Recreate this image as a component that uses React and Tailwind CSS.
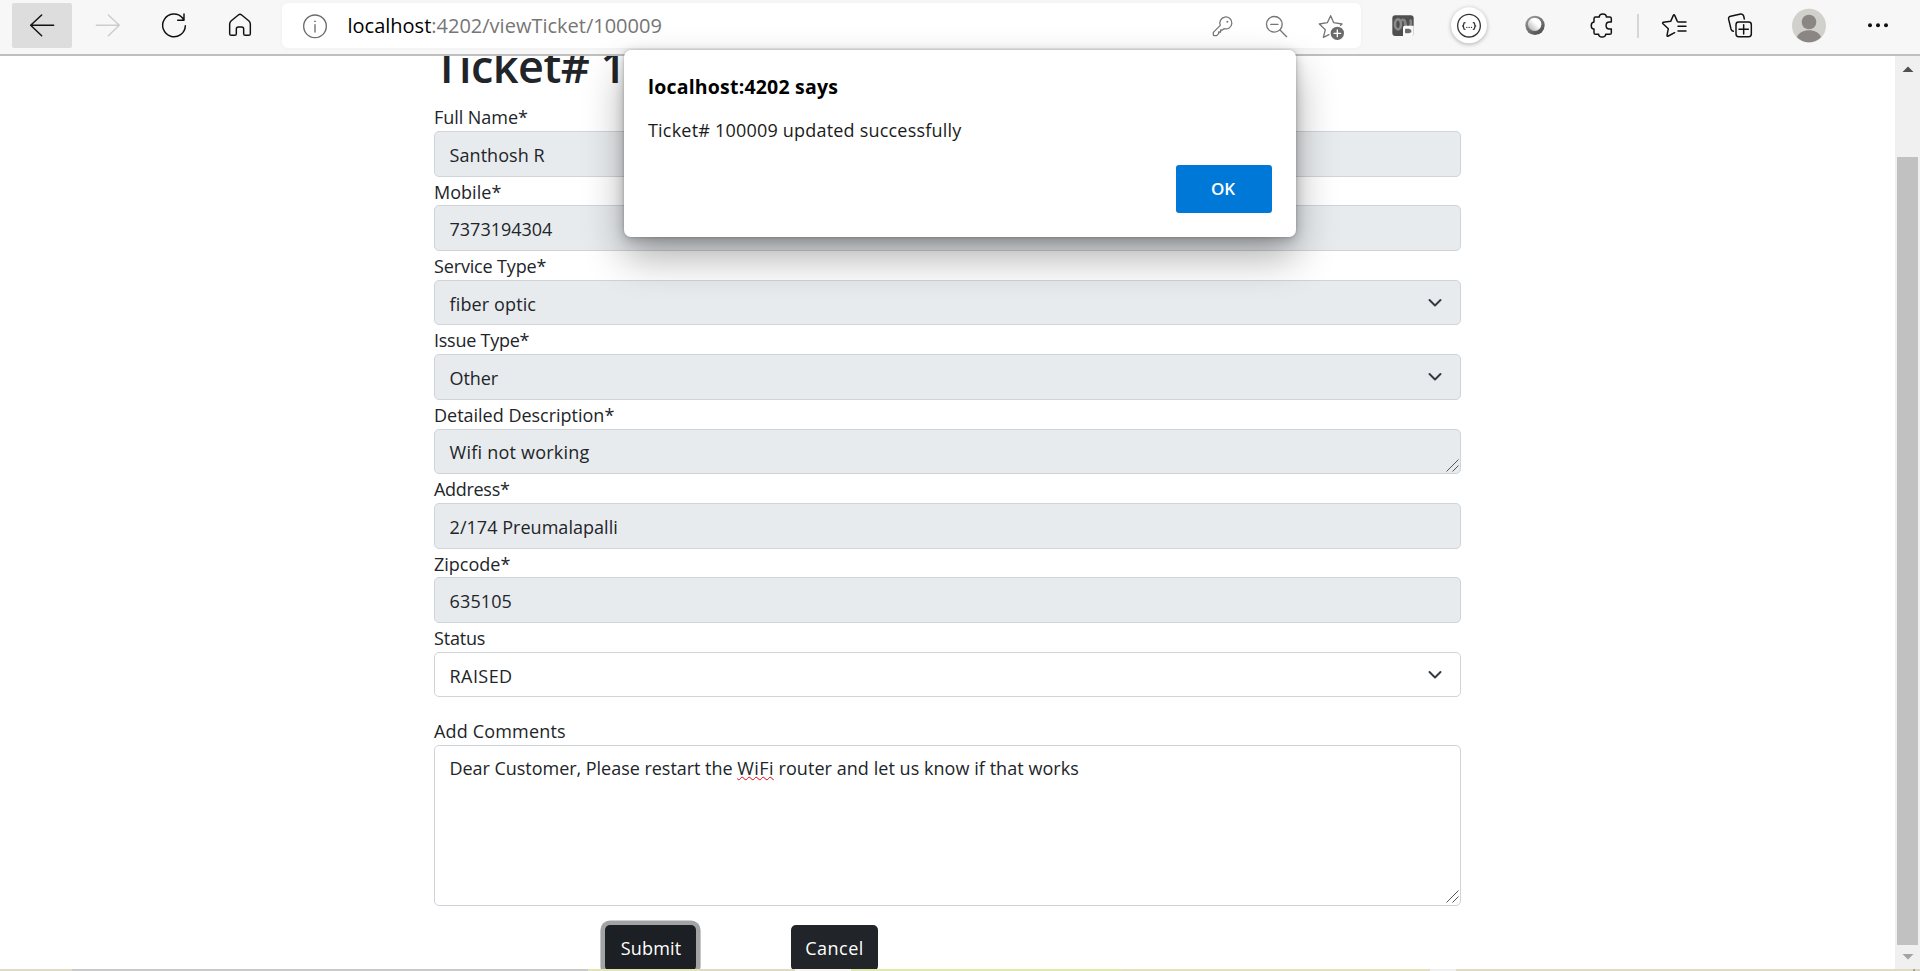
import React from "react";

function Icon({ box, color = "#111", width = 4.4, className = "", children }) {
  return (
    <svg
      viewBox={box}
      className={`shrink-0 ${className}`}
      fill="none"
      stroke={color}
      strokeWidth={width}
      strokeLinecap="round"
      strokeLinejoin="round"
    >
      {children}
    </svg>
  );
}

const cell = "h-12 w-[66px]";
const smallCell = "h-12 w-[54px]";

function Toolbar() {
  return (
    <header className="flex h-14 shrink-0 items-start border-b-2 border-[#bfbfbf] bg-[#f7f7f7]">
      <div className="flex shrink-0 pt-px pl-[9px]">
        <Icon box="27 3 198 144" className={cell}>
          <rect x="36" y="9" width="180" height="135" rx="6" fill="#dddddd" stroke="none" />
          <path d="M92 76H161M125 45L92 76L125 107" />
        </Icon>
        <Icon box="225 3 198 144" color="#cdcdcd" className={cell}>
          <path d="M289 76H358M325 45L358 76L325 107" />
        </Icon>
        <Icon box="423 3 198 144" className={cell}>
          <path d="M556 77A34 34 0 1 1 547 53L551 60M552 42V61H533" />
        </Icon>
        <Icon box="621 3 198 144" className={cell}>
          <path d="M693 63L715 45Q720 41 725 45L747 63Q751 67 751 72V101Q751 106 746 106H736Q731 106 731 101V87Q731 81 725 81H715Q709 81 709 87V101Q709 106 704 106H694Q689 106 689 101V72Q689 67 693 63Z" />
        </Icon>
      </div>

      <div className="mt-[3px] ml-[9px] flex h-[45px] w-[1079px] shrink-0 items-center rounded-md bg-white pr-1 pl-[19px] shadow-[0_0_5px_rgba(0,0,0,0.04)]">
        <Icon box="903 3 84 144" color="#6b6b6b" width={4} className="h-12 w-7">
          <circle cx="945" cy="76" r="34" />
          <path d="M945 71V93" />
          <circle cx="945" cy="61" r="2.6" fill="#6b6b6b" stroke="none" />
        </Icon>
        <div className="ml-[18.5px] flex-1 text-[20px] leading-[30px] whitespace-nowrap text-[#767676]">
          <span className="text-black">localhost</span>:4202/viewTicket/100009
        </div>
        <Icon box="15 3 162 144" color="#767676" width={3.8} className={smallCell}>
          <path d="M91 73A18 18 0 1 1 102 83L97 87H92V93H86V98L80 104H73Q70 104 70 101V94Z" />
          <circle cx="112" cy="62" r="3" fill="#767676" stroke="none" />
        </Icon>
        <Icon box="177 3 162 144" color="#767676" width={4} className={smallCell}>
          <circle cx="253" cy="70" r="23.5" />
          <path d="M242 70H264M270 87L290 107" />
        </Icon>
        <Icon box="339 3 162 144" color="#767676" width={4} className={smallCell}>
          <path d="M452 73L456 69L431 65L422 44L412 65L388 69L406 86L400 109L417 101" />
          <circle cx="442" cy="97" r="20" fill="#6b6b6b" stroke="none" />
          <path d="M442 87V107M432 97H452" stroke="#fff" />
        </Icon>
      </div>

      <div className="ml-[9px] flex shrink-0 pt-px">
        <Icon box="540 3 198 144" className={cell}>
          <rect x="607" y="46" width="64" height="62" rx="9" fill="#4f4f4f" stroke="none" />
          <ellipse cx="624" cy="73" rx="9" ry="15" stroke="#8b8b8b" strokeWidth="8" />
          <path d="M636 60Q646 58 646 72Q648 84 655 84Q665 78 662 62" stroke="#858585" strokeWidth="8" />
          <path d="M644 77H671V100Q671 109 662 109H639V82Q639 77 644 77Z" fill="#fafafa" stroke="none" />
          <path d="M648 86H657L664 90V97L657 100H648Q645 100 645 97V89Q645 86 648 86Z" fill="#6c6c6c" stroke="none" />
        </Icon>
        <Icon box="738 3 198 144" color="#333" width={4} className={`${cell} overflow-visible drop-shadow-[0_1px_2px_rgba(0,0,0,0.3)]`}>
          <circle cx="837" cy="76" r="54" fill="#fff" stroke="none" />
          <circle cx="837" cy="77" r="34" />
          <path d="M825 68Q821 68 821 73Q821 78 818 78Q821 78 821 83Q821 88 825 88M850 68Q854 68 854 73Q854 78 857 78Q854 78 854 83Q854 88 850 88" />
          <path d="M830 82H831M837 82H838M844 82H845" strokeWidth="3.5" />
        </Icon>
        <Icon box="936 3 198 144" className={cell}>
          <defs>
            <linearGradient id="orb" x1="0" y1="0" x2="0.7" y2="1">
              <stop offset="0" stopColor="#a2a2a2" />
              <stop offset="1" stopColor="#505050" />
            </linearGradient>
            <linearGradient id="orbCore" x1="1" y1="0" x2="0.1" y2="0.9">
              <stop offset="0.45" stopColor="#ffffff" />
              <stop offset="1" stopColor="#b5b5b5" />
            </linearGradient>
          </defs>
          <circle cx="1035" cy="76" r="29" fill="url(#orb)" stroke="none" />
          <circle cx="1034" cy="73" r="20" fill="url(#orbCore)" stroke="none" />
        </Icon>
        <Icon box="54 3 198 144" className={cell}>
          <path d="M137 51H148C148 39 169 39 169 51H179Q184 51 184 56V66H178C165 66 165 87 178 87H184V98Q184 103 179 103H167C167 114 146 114 146 103H137Q132 103 132 98V87C121 87 121 67 132 66V56Q132 51 137 51Z" />
        </Icon>
        <div className="mt-[13px] ml-[3px] h-6 w-0.5 bg-[#d6d6d6]" />
        <Icon box="273 3 198 144" className={`${cell} ml-0.5`}>
          <path d="M408 66H386Q383 66 382 64L374 46Q372 42 370 46L362 64L340 67Q336 68 339 71L355 86L351 106Q351 111 355 108L374 98M384 79H408M384 93H408" />
        </Icon>
        <Icon box="471 3 198 144" className={cell}>
          <path d="M583 57L581 48Q579 41 572 42L542 49Q534 51 536 58L543 87Q545 93 550 94" />
          <rect x="558" y="66" width="46" height="44" rx="8" />
          <path d="M581 74V102M567 88H595" />
        </Icon>
        <Icon box="678 3 198 144" className={`${cell} ml-[3px]`}>
          <circle cx="777" cy="77" r="51" fill="#d2d0cb" stroke="none" />
          <circle cx="777" cy="66" r="22" fill="#8a8683" stroke="none" />
          <path d="M741 112C750 84 804 84 813 112A51 51 0 0 1 741 112Z" fill="#8a8683" stroke="none" />
        </Icon>
        <Icon box="885 3 198 144" className={`${cell} ml-[3px]`}>
          <g fill="#111" stroke="none">
            <circle cx="960" cy="76" r="6" />
            <circle cx="984" cy="76" r="6" />
            <circle cx="1008" cy="76" r="6" />
          </g>
        </Icon>
      </div>
    </header>
  );
}

function Chevron() {
  return (
    <svg viewBox="0 0 16 16" className="mr-[17px] h-4 w-4 shrink-0 self-center" fill="none" stroke="#343a40" strokeWidth="2" strokeLinecap="round" strokeLinejoin="round">
      <path d="M2.5 5L8 10.5L13.5 5" />
    </svg>
  );
}

function Grip() {
  return (
    <svg viewBox="0 0 13 13" className="mr-[1.5px] mb-[1.5px] h-[13px] w-[13px] shrink-0 self-end" fill="none" stroke="#555" strokeWidth="1">
      <path d="M0.5 12.5L12.5 0.5M6.5 12.5L12.5 6.5" />
    </svg>
  );
}

const fields = [
  { label: "Full Name*", labelClass: "tracking-[-0.05px]", value: "Santhosh R", valueClass: "tracking-[0.05px]" },
  { label: "Mobile*", labelClass: "tracking-[0.03px]", value: "7373194304", valueClass: "tracking-[-0.03px]" },
  { label: "Service Type*", labelClass: "tracking-[-0.15px]", value: "fiber optic", valueClass: "tracking-[0.12px]", end: "select" },
  { label: "Issue Type*", labelClass: "tracking-[-0.25px]", value: "Other", valueClass: "tracking-[-0.1px]", end: "select" },
  { label: "Detailed Description*", labelClass: "tracking-[-0.01px]", value: "Wifi not working", valueClass: "tracking-[0.22px]", end: "grip" },
  { label: "Address*", labelClass: "tracking-[-0.3px]", value: "2/174 Preumalapalli", valueClass: "tracking-[0.03px]" },
  { label: "Zipcode*", labelClass: "tracking-[0px]", value: "635105", valueClass: "tracking-[0.1px]" },
  { label: "Status", labelClass: "tracking-[-0.2px]", value: "RAISED", valueClass: "tracking-[0.42px]", end: "select", editable: true },
];

function Field({ label, labelClass, value, valueClass, end, editable }) {
  return (
    <div>
      <label className={`block h-[28.8px] pt-[1px] ${labelClass}`}>{label}</label>
      <div className={`flex h-[45.6px] rounded-[5px] border border-[#ced4da] ${editable ? "bg-white" : "bg-[#e8ebee]"}`}>
        <span className={`flex-1 pt-[8.7px] pl-[14.6px] ${valueClass}`}>{value}</span>
        {end === "select" && <Chevron />}
        {end === "grip" && <Grip />}
      </div>
    </div>
  );
}

function TicketForm() {
  return (
    <form className="-mt-[19.4px] ml-[434px] w-[1027px] text-[18px] leading-[28.8px] text-[#212529]">
      <h1 className="mb-[8.1px] text-[45px] leading-[57.6px] font-semibold tracking-[-0.5px]">Ticket# 1</h1>
      {fields.map((f) => (
        <Field key={f.label} {...f} />
      ))}
      <label className="mt-[18.9px] block h-[28.8px] pt-[0.8px] tracking-[0.17px]">Add Comments</label>
      <div className="flex h-[160.8px] rounded-[5px] border border-[#ced4da]">
        <p className="flex-1 pt-[7.6px] pl-[14.4px] tracking-[0.05px]">
          <span className="tracking-[-0.03px]">Dear Customer, Please restart the </span>
          <span className="tracking-[0.4px] underline decoration-red-600 decoration-wavy decoration-1 underline-offset-1 [text-decoration-skip-ink:none]">WiFi</span>
          {" router and let us know if that works"}
        </p>
        <Grip />
      </div>
      <div className="mt-[19px] ml-[171px] flex gap-[95px] text-white">
        <button type="button" className="h-[45.6px] w-[91px] rounded-[5px] bg-[#1c1f23] pt-0.5 pl-px tracking-[0.18px] shadow-[0_0_0_4.6px_#a1a3a5]">Submit</button>
        <button type="button" className="h-[45.6px] w-[87px] rounded-[5px] bg-[#212529] pt-0.5 tracking-[0.5px]">Cancel</button>
      </div>
    </form>
  );
}

function Scrollbar() {
  return (
    <div className="flex w-[25px] shrink-0 flex-col items-center bg-[#f0f0f0]">
      <svg viewBox="0 0 12 6" className="mt-2.5 h-1.5 w-3 shrink-0" fill="#505050">
        <path d="M0.5 6L6 0.4L11.5 6Z" />
      </svg>
      <div className="mt-[85px] w-[21px] flex-1 bg-[#c1c1c1]" />
      <svg viewBox="0 0 12 6" className="mt-[9px] mb-[9px] h-1.5 w-3 shrink-0" fill="#a3a3a3">
        <path d="M0.5 0L6 5.6L11.5 0Z" />
      </svg>
    </div>
  );
}

function AlertDialog() {
  return (
    <div className="absolute top-[50px] left-[624px] flex h-[187px] w-[672px] flex-col rounded-[7px] bg-white px-6 shadow-[0_0_3px_rgba(0,0,0,0.2),0_3px_12px_rgba(0,0,0,0.22),0_20px_40px_rgba(0,0,0,0.32)]">
      <h2 className="mt-[23px] text-[19.5px] leading-7 font-bold tracking-[0.2px] text-black">localhost:4202 says</h2>
      <p className="mt-[14.5px] text-[18px] leading-7 tracking-[0.2px] text-[#1b1b1b]">Ticket# 100009 updated successfully</p>
      <button type="button" className="mt-[21.5px] h-12 w-24 self-end rounded-[3px] bg-[#0078d7] pr-2 text-[17px] font-semibold text-white"><span className="pl-1.5">OK</span></button>
    </div>
  );
}

export default function App() {
  return (
    <div className="relative flex h-[971px] w-[1920px] flex-col overflow-hidden bg-white font-['Open_Sans','Noto_Sans',sans-serif]">
      <Toolbar />
      <div className="flex min-h-0 flex-1">
        <main className="flex-1 overflow-hidden">
          <TicketForm />
        </main>
        <Scrollbar />
      </div>
      <div className="flex h-0.5 shrink-0">
        <div className="w-[72px] bg-[#dedcc8]" />
        <div className="w-[516px] bg-[#cacaca]" />
        <div className="w-[112px] bg-[#e0e4b6]" />
        <div className="w-[95px] bg-[#dedac6]" />
        <div className="w-14 bg-[#f6f5f0]" />
        <div className="w-[270px] bg-[#e0e8b2]" />
        <div className="w-[309px] bg-[#e3e0bd]" />
        <div className="w-[26px] bg-[#efefef]" />
        <div className="w-[457px] bg-[#e0dbc5]" />
        <div className="w-[2px] bg-[#a9a69a]" />
        <div className="flex-1 bg-[#d8d4c2]" />
      </div>
      <AlertDialog />
    </div>
  );
}
